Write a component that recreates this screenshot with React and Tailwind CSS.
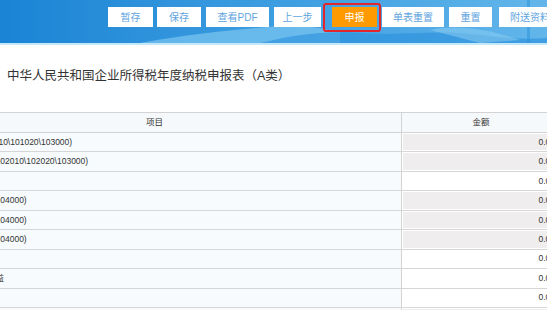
import React from 'react';

const buttons = [
  { label: '暂存', cls: 'w-[45px]' },
  { label: '保存', cls: 'w-[44px] ml-[4px]' },
  { label: '查看PDF', cls: 'w-[63px] ml-[5px]' },
  { label: '上一步', cls: 'w-[47px] ml-[5px]' },
  { label: '申报', cls: 'w-[45px] ml-[11px]', active: true },
  { label: '单表重置', cls: 'w-[62px] ml-[5px]' },
  { label: '重置', cls: 'w-[43px] ml-[5px]' },
  { label: '附送资料', cls: 'w-[62px] ml-[7px]' },
];

const rows = [
  { text: '一、营业收入(填写A101010\\101020\\103000)', ro: true },
  { text: '减：营业成本(填写A102010\\102020\\103000)', ro: true, indent: true },
  { text: '减：税金及附加', indent: true },
  { text: '减：销售费用(填写A104000)', ro: true, indent: true },
  { text: '减：管理费用(填写A104000)', ro: true, indent: true },
  { text: '减：财务费用(填写A104000)', ro: true, indent: true },
  { text: '减：资产减值损失', indent: true },
  { text: '加：公允价值变动收益', indent: true },
  { text: '加：投资收益', indent: true },
  { text: '二、营业利润(1-2-3-4-5-6-7+8+9)', ro: true },
];

export default function App() {
  return (
    <div className="relative h-[310px] w-[547px] overflow-hidden bg-white font-['Liberation_Sans','Noto_Sans_CJK_SC',sans-serif] text-[#333]">

      {/* Toolbar */}
      <div className="relative h-[43px] overflow-hidden bg-gradient-to-r from-[#1a84d5] via-[#3c9de0] to-[#62b6ea]">
        <svg className="absolute inset-0" width="547" height="43" viewBox="0 0 547 43">
          <path d="M140 43 C190 34 230 30 280 26 C300 24 320 28 340 32 L340 43 Z" fill="#7cc6f1" opacity="0.7" />
          <path d="M260 43 C290 36 320 30 360 33 C400 36 430 30 470 34 C500 37 520 40 547 38 L547 43 Z" fill="#2a8fdc" opacity="0.6" />
          <path d="M430 30 C460 24 490 30 520 40 L480 43 Z" fill="#8fd0f4" opacity="0.5" />
          <rect x="527" y="0" width="3" height="43" fill="#2b8fd9" opacity="0.5" />
        </svg>
        <div className="relative flex pl-[108px] pt-[7px]">
          {buttons.map((b) => (
            <div
              key={b.label}
              className={`${b.cls} flex h-[20px] shrink-0 items-center justify-center text-[10px] ${
                b.active ? 'bg-[#ff9a00] text-white' : 'bg-white text-[#5ea4de]'
              }`}
            >
              {b.label}
            </div>
          ))}
        </div>
      </div>
      <div className="h-[2px] bg-[#c4e8f8]" />

      {/* highlight */}
      <div className="absolute left-[323px] top-[3px] h-[29px] w-[58px] rounded-[3px] border-[2.5px] border-[#e3262b]" />

      {/* Title */}
      <div className="mt-[23px] pl-[7px] text-[12.5px] leading-[16px] text-[#333]">
        中华人民共和国企业所得税年度纳税申报表（A类）
      </div>

      {/* Table */}
      <div className="mt-[28px] overflow-hidden">
        <div className="-ml-[100px] w-[660px] text-[8.5px]">
          <div className="flex h-[21px] border-y border-[#d3d3d3] bg-[#f6f9fb]">
            <div className="flex w-[502px] items-center justify-center border-r border-[#d3d3d3] pl-[8px]">
              项目
            </div>
            <div className="flex w-[158px] items-center justify-center">金额</div>
          </div>
          {rows.map((r) => (
            <div key={r.text} className="flex h-[19.44px] border-b border-[#d6d6d6]">
              <div
                className={`flex w-[502px] items-center overflow-hidden whitespace-nowrap border-r border-[#d3d3d3] bg-[#f7fbfd] ${
                  r.indent ? 'pl-[19px]' : 'pl-[3px]'
                }`}
              >
                {r.text}
              </div>
              <div className="w-[158px] p-[1px]">
                <div
                  className={`flex h-full items-center justify-end pr-[4px] ${
                    r.ro ? 'bg-[#efeded]' : 'bg-white'
                  }`}
                >
                  0.00
                </div>
              </div>
            </div>
          ))}
        </div>
      </div>
    </div>
  );
}
